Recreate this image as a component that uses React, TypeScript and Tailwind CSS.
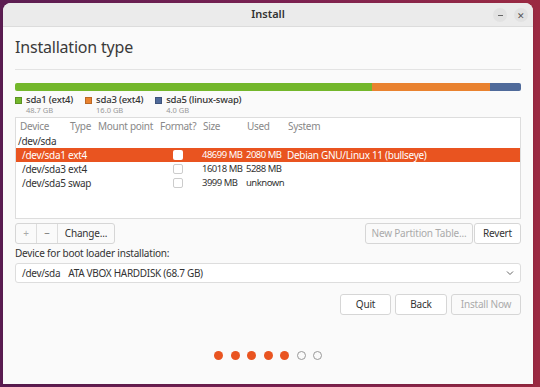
const rows = [
  { dev: "/dev/sda1", type: "ext4", size: "48699 MB", used: "2080 MB", sys: "Debian GNU/Linux 11 (bullseye)", sel: true },
  { dev: "/dev/sda3", type: "ext4", size: "16018 MB", used: "5288 MB", sys: "", sel: false },
  { dev: "/dev/sda5", type: "swap", size: "3999 MB", used: "unknown", sys: "", sel: false },
];

function Legend({ color, name, size }: { color: string; name: string; size: string }) {
  return (
    <div className="flex flex-col">
      <div className="flex items-center gap-[4px] h-[12px]">
        <span className={`w-[7px] h-[7px] border border-black/20 ${color}`} />
        <span className="text-[9.5px] font-medium tracking-[-0.2px] text-[#333] leading-[12px]">{name}</span>
      </div>
      <span className="pl-[11px] text-[7.5px] text-[#999] leading-[9px]">{size}</span>
    </div>
  );
}

export default function App() {
  return (
    <div
      className="w-[540px] h-[387px] p-[3px] pr-[7px] bg-gradient-to-r from-[#5c1d52] via-[#7a2152] to-[#9b2a42]"
      style={{ fontFamily: '"Noto Sans", "Open Sans", sans-serif' }}
    >
      <div className="w-full h-full bg-[#fafafa] rounded-t-[8px] flex flex-col overflow-hidden shadow">
        {/* title bar */}
        <div className="h-[24px] bg-[#ebebeb] border-b border-[#dcdcdc] flex items-center relative">
          <span className="mx-auto text-[11px] font-semibold text-[#333]">Install</span>
          <div className="absolute right-[5px] top-[5px] flex gap-[7px]">
            <span className="w-[14px] h-[14px] rounded-full bg-[#e2e2e2] flex items-center justify-center">
              <span className="w-[5px] h-px bg-[#666]" />
            </span>
            <span className="w-[14px] h-[14px] rounded-full bg-[#e2e2e2] flex items-center justify-center text-[9px] text-[#555] leading-none">
              ✕
            </span>
          </div>
        </div>

        <div className="flex-1 px-[12px] flex flex-col">
          <h1 className="text-[16px] tracking-[-0.2px] text-[#3a3a3a] mt-[8px] leading-[24px]">Installation type</h1>
          <div className="h-px bg-[#e3e3e3] mt-[10px]" />

          {/* partition bar */}
          <div className="mt-[13px] h-[8px] flex rounded-[2px] overflow-hidden">
            <div className="w-[357px] bg-[#73b72b]" />
            <div className="w-[118px] bg-[#e9822f]" />
            <div className="flex-1 bg-[#4f6a9a]" />
          </div>
          <div className="flex gap-[12px] mt-[3px]">
            <Legend color="bg-[#73b72b]" name="sda1 (ext4)" size="48.7 GB" />
            <Legend color="bg-[#e9822f]" name="sda3 (ext4)" size="16.0 GB" />
            <Legend color="bg-[#4f6a9a]" name="sda5 (linux-swap)" size="4.0 GB" />
          </div>

          {/* table */}
          <div className="mt-[2px] h-[102px] bg-white border border-[#ddd] text-[10px] tracking-[-0.3px] text-[#333] whitespace-nowrap">
            <div className="flex h-[16px] items-center text-[#888] pl-[4px]">
              <span className="w-[50px]">Device</span>
              <span className="w-[28px]">Type</span>
              <span className="w-[62px]">Mount point</span>
              <span className="w-[43px]">Format?</span>
              <span className="w-[44px]">Size</span>
              <span className="w-[41px]">Used</span>
              <span>System</span>
            </div>
            <div className="h-[14px] flex items-center pl-[2px]">/dev/sda</div>
            {rows.map((r) => (
              <div
                key={r.dev}
                className={`h-[14px] flex items-center pl-[6px] ${r.sel ? "bg-[#e95420] text-white" : ""}`}
              >
                <span className="w-[46px]">{r.dev}</span>
                <span className="w-[105px]">{r.type}</span>
                <span className="w-[29px]">
                  <span
                    className={`block w-[10px] h-[10px] rounded-[2px] ${r.sel ? "bg-white" : "border border-[#ccc] bg-white"}`}
                  />
                </span>
                <span className="w-[44px] text-[9.5px] tracking-[-0.5px]">{r.size}</span>
                <span className="w-[41px] text-[9.5px] tracking-[-0.5px]">{r.used}</span>
                <span>{r.sys}</span>
              </div>
            ))}
          </div>

          {/* partition buttons */}
          <div className="flex mt-[4px] h-[21px] text-[10px] tracking-[-0.2px]">
            <div className="flex border border-[#d6d6d6] rounded-[3px] bg-[#fafafa] overflow-hidden">
              <span className="w-[21px] flex items-center justify-center text-[#aaa] border-r border-[#ddd]">+</span>
              <span className="w-[21px] flex items-center justify-center text-[#666] border-r border-[#ddd]">−</span>
              <span className="w-[56px] flex items-center justify-center text-[#333]">Change...</span>
            </div>
            <div className="ml-auto flex gap-[1px]">
              <span className="w-[108px] flex items-center justify-center border border-[#d6d6d6] rounded-[3px] text-[#aaa]">
                New Partition Table...
              </span>
              <span className="w-[47px] flex items-center justify-center border border-[#d6d6d6] rounded-[3px] text-[#333] bg-white">
                Revert
              </span>
            </div>
          </div>

          <div className="text-[10px] tracking-[-0.2px] text-[#333] mt-[2px] leading-[14px]">Device for boot loader installation:</div>
          <div className="mt-[3px] h-[20px] border border-[#ddd] rounded-[3px] bg-white flex items-center px-[6px] text-[10px] tracking-[-0.3px] text-[#333]">
            <span>/dev/sda</span>
            <span className="ml-[8px]">ATA VBOX HARDDISK (68.7 GB)</span>
            <svg className="ml-auto" width="8" height="8" viewBox="0 0 8 8">
              <path d="M1 2.5 L4 5.5 L7 2.5" fill="none" stroke="#666" strokeWidth="1" />
            </svg>
          </div>

          <div className="flex justify-end gap-[4px] mt-[11px] text-[10px] tracking-[-0.2px]">
            <span className="w-[51px] h-[21px] flex items-center justify-center border border-[#d6d6d6] rounded-[3px] bg-white text-[#333]">
              Quit
            </span>
            <span className="w-[52px] h-[21px] flex items-center justify-center border border-[#d6d6d6] rounded-[3px] bg-white text-[#333]">
              Back
            </span>
            <span className="w-[70px] h-[21px] flex items-center justify-center border border-[#d6d6d6] rounded-[3px] text-[#aaa]">
              Install Now
            </span>
          </div>

          <div className="flex justify-center gap-[7.5px] mt-[36px]">
            {[0, 1, 2, 3, 4].map((i) => (
              <span key={i} className="w-[9px] h-[9px] rounded-full bg-[#e95420]" />
            ))}
            {[5, 6].map((i) => (
              <span key={i} className="w-[9px] h-[9px] rounded-full border border-[#999]" />
            ))}
          </div>
        </div>
      </div>
    </div>
  );
}
